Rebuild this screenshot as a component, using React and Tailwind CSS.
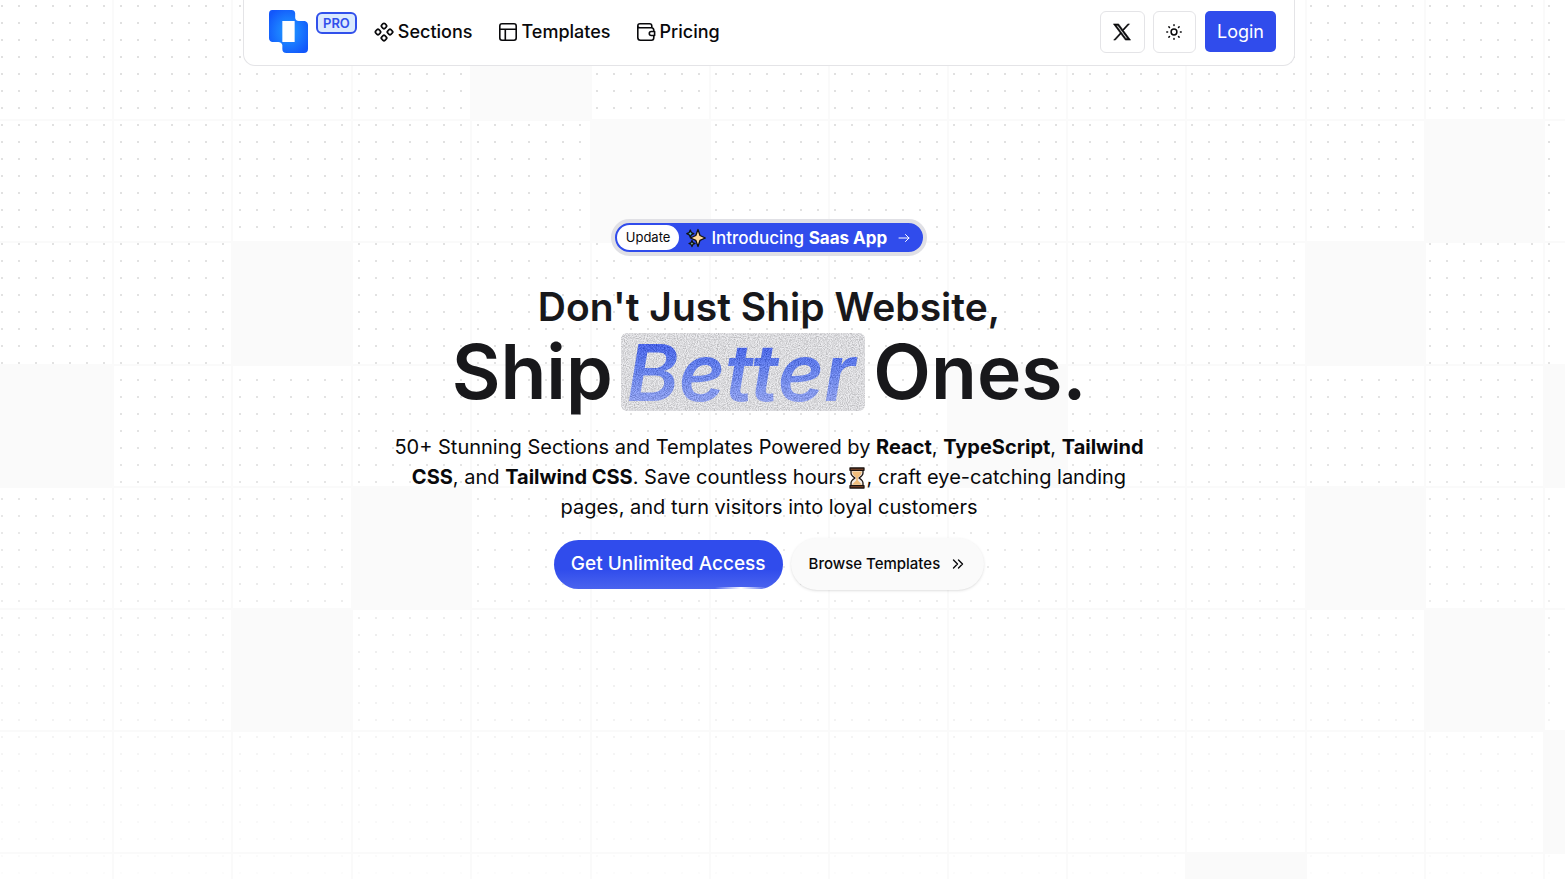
import React from "react";

const columns = [112, 231, 351, 470, 590, 709, 828, 947, 1066, 1185, 1305, 1424, 1543];
const rows = [119, 241, 364, 486, 608, 730, 852];

const cells = [
  [471, 0, 121, 121],
  [591, 120, 119, 122],
  [1425, 120, 119, 122],
  [232, 242, 120, 123],
  [1306, 242, 119, 123],
  [0, 364, 113, 124],
  [948, 364, 120, 124],
  [1543, 364, 120, 124],
  [352, 487, 120, 122],
  [1306, 487, 119, 122],
  [232, 609, 120, 122],
  [1425, 609, 119, 122],
  [1543, 731, 120, 122],
  [1186, 853, 120, 122],
];

function Backdrop() {
  return (
    <svg className="absolute inset-0 -z-10 h-full w-full" aria-hidden="true">
      <defs>
        <pattern id="dots" width="17" height="17" patternUnits="userSpaceOnUse">
          <rect x="1" y="5" width="2" height="2" fill="#e0e0e0" />
        </pattern>
        <linearGradient id="fade" x1="0" y1="0" x2="0" y2="1">
          <stop offset="0" stopColor="#fff" stopOpacity="0" />
          <stop offset="0.5" stopColor="#fff" stopOpacity="0.1" />
          <stop offset="1" stopColor="#fff" stopOpacity="0.9" />
        </linearGradient>
      </defs>
      <rect width="100%" height="100%" fill="url(#dots)" />
      <rect width="100%" height="100%" fill="url(#fade)" />
      {columns.map((x) => (
        <rect key={x} x={x} y="0" width="2" height="100%" fill="#fafafa" />
      ))}
      {rows.map((y) => (
        <rect key={y} x="0" y={y} width="100%" height="2" fill="#fafafa" />
      ))}
      {cells.map(([x, y, w, h]) => (
        <rect key={`${x}-${y}`} x={x} y={y} width={w} height={h} fill="#fafafa" />
      ))}
    </svg>
  );
}

function Logo() {
  return (
    <svg width="39" height="43" viewBox="0 0 38 43" preserveAspectRatio="none" aria-hidden="true">
      <defs>
        <radialGradient id="logo" cx="0.5" cy="0.5" r="0.6">
          <stop offset="0" stopColor="#1f9bff" />
          <stop offset="0.5" stopColor="#1a7bff" />
          <stop offset="1" stopColor="#1257fb" />
        </radialGradient>
      </defs>
      <path
        fill="url(#logo)"
        fillRule="evenodd"
        d="M3 0H22Q25 0 25.500 3V8Q26 11 29 11H35Q38 12 38 15V39Q38 43 34 43H17Q13 43 13 39V35Q12 32 9 32H3Q0 31 0 28V4Q0 0 3 0ZM13 11V32H25V11Z"
      />
    </svg>
  );
}

const stroke = { fill: "none", stroke: "currentColor", strokeLinecap: "round", strokeLinejoin: "round" };

function SectionsIcon() {
  return (
    <svg width="20" height="20" viewBox="0 0 20 20" strokeWidth="1.7" {...stroke} aria-hidden="true">
      <rect x="7.700" y="1.700" width="4.600" height="4.600" rx="1.300" transform="rotate(45 10 4)" />
      <rect x="1.700" y="7.700" width="4.600" height="4.600" rx="1.300" transform="rotate(45 4 10)" />
      <rect x="13.700" y="7.700" width="4.600" height="4.600" rx="1.300" transform="rotate(45 16 10)" />
      <rect x="7.700" y="13.700" width="4.600" height="4.600" rx="1.300" transform="rotate(45 10 16)" />
    </svg>
  );
}

function TemplatesIcon() {
  return (
    <svg width="20" height="20" viewBox="0 0 20 20" strokeWidth="1.600" {...stroke} aria-hidden="true">
      <rect x="1.800" y="1.800" width="16.400" height="16.400" rx="2.200" />
      <path d="M2 7.300H18M7.300 7.300V18" />
    </svg>
  );
}

function PricingIcon() {
  return (
    <svg width="20" height="20" viewBox="0 0 20 20" strokeWidth="1.600" {...stroke} aria-hidden="true">
      <path d="M1.800 4V15.500Q1.800 18.200 4.500 18.200H15.500Q17.800 18.200 17.800 15.500V14.200M17.800 8.500Q17.800 5.800 15.500 5.800H4Q1.800 5.800 1.800 4Q1.800 1.800 4 1.800H13.500Q15.800 1.800 15.800 4V5.800" />
      <path d="M18.600 9.500V13.500H15.300A2 2 0 0 1 15.300 9.500Z" />
    </svg>
  );
}

function XIcon() {
  return (
    <svg width="18" height="18" viewBox="0 0 24 24" fill="currentColor" stroke="currentColor" strokeWidth="0.700" aria-hidden="true">
      <path fillRule="evenodd" d="M0.500 1.200H7.500L13 8.600 19.700 1.200H22L14 10.100 23.500 22.800H16.500L10.500 14.800 3.200 22.800H0.900L9.500 13.300ZM4.500 3.400 17.300 20.600H19.300L6.500 3.400Z" />
    </svg>
  );
}

function SunIcon() {
  return (
    <svg width="16" height="16" viewBox="0 0 16 16" strokeWidth="1.500" {...stroke} aria-hidden="true">
      <circle cx="8" cy="8" r="2.900" />
      <path d="M8 .8V1.600M8 14.400V15.200M.8 8H1.600M14.400 8H15.200M2.900 2.900 3.500 3.500M12.500 12.500 13.100 13.100M2.900 13.100 3.500 12.500M12.500 3.500 13.100 2.900" />
    </svg>
  );
}

function Sparkles() {
  return (
    <svg width="20" height="20" viewBox="0 0 20 20" stroke="#111" strokeWidth="1.300" strokeLinejoin="round" aria-hidden="true">
      <path fill="#ffd89a" d="M12 1.500 14 7.500 19.300 10 14 12.300 12 18.500 9.800 12.300 4.500 10 9.800 7.500Z" />
      <path fill="#4bbbe8" d="M4.300 2 5.300 4.600 7.800 5.700 5.300 6.800 4.300 9.300 3.200 6.800.8 5.700 3.200 4.600Z" />
      <path fill="#8fd0c0" d="M6 12.500 6.900 14.700 9 15.500 6.900 16.400 6 18.600 5 16.400 3 15.500 5 14.700Z" />
    </svg>
  );
}

function Hourglass() {
  return (
    <svg className="inline-block align-[-5px]" width="20" height="22" viewBox="0 0 20 22" stroke="#1b1310" strokeWidth="1.300" strokeLinejoin="round" aria-hidden="true">
      <path fill="#f3ece6" d="M4 3V6Q4 8.500 8 11 4 13.500 4 16V19H16V16Q16 13.500 12 11 16 8.500 16 6V3Z" />
      <path stroke="none" fill="#f0bd7c" d="M5 4.500H15Q14.500 8 10.900 10.500V13.500L15 17.800H5L9.100 13.500V10.500Q5.500 8 5 4.500Z" />
      <path fill="#8a4b2a" d="M3 1H17V3.300H3ZM3 18.700H17V21H3Z" />
    </svg>
  );
}

function Grain() {
  return (
    <svg className="absolute inset-0 h-full w-full rounded-md opacity-25" aria-hidden="true">
      <filter id="grain" x="0" y="0" width="100%" height="100%" colorInterpolationFilters="sRGB">
        <feTurbulence type="fractalNoise" baseFrequency="0.9" numOctaves="2" seed="4" stitchTiles="stitch" />
        <feColorMatrix values="1.700 0 0 0 -0.150  1.700 0 0 0 -0.150  1.700 0 0 0 -0.150  0 0 0 0 1" />
      </filter>
      <rect width="100%" height="100%" filter="url(#grain)" />
    </svg>
  );
}

const links = [
  ["Sections", SectionsIcon],
  ["Templates", TemplatesIcon],
  ["Pricing", PricingIcon],
];

export default function App() {
  return (
    <div className="relative isolate min-h-screen overflow-hidden bg-white pr-[27px] font-['Inter',sans-serif] text-[#09090b]">
      <Backdrop />
      <header className="mx-auto flex h-[66px] max-w-[1052px] items-center rounded-b-xl border border-t-0 border-[#e4e4e7] bg-white pr-[18px] pb-0.5 pl-[25px]">
        <a href="#home" aria-label="Home" className="flex items-start gap-2">
          <Logo />
          <span className="mt-[2px] rounded-md border-2 border-[#3150eb] bg-[#dbeafe] px-[5px] text-[13px] leading-[18px] font-semibold text-[#3150eb]">
            PRO
          </span>
        </a>
        <nav aria-label="Main" className="ml-[17px] flex items-center gap-[25px]">
          {links.map(([label, Icon]) => (
            <a key={label} href={`#${label.toLowerCase()}`} className="flex items-center gap-1 text-[18px] leading-6 font-medium">
              <Icon />
              {label}
            </a>
          ))}
        </nav>
        <div className="ml-auto flex items-center gap-2">
          <a href="#x" aria-label="X" className="flex h-[42px] w-[45px] items-center justify-center rounded-md border border-[#e4e4e7]">
            <XIcon />
          </a>
          <button type="button" aria-label="Toggle theme" className="flex h-[42px] w-[43px] items-center justify-center rounded-md border border-[#e4e4e7]">
            <SunIcon />
          </button>
          <button type="button" className="ml-px h-[41px] rounded-[5px] bg-[#304cec] px-3 text-[18px] text-white">
            Login
          </button>
        </div>
      </header>

      <main className="flex flex-col items-center pt-[153px] text-center">
        <a href="#saas" className="flex h-[37px] items-center rounded-full border-4 border-[#e0e0e5] bg-[#304cec] pr-3 pl-0.5 text-white">
          <span className="flex h-[25px] items-center rounded-full bg-white px-[9px] text-[13px] text-[#09090b]">Update</span>
          <span className="ml-[7px] flex items-center gap-[5px] text-[17px] leading-6">
            <Sparkles />
            <span className="font-medium">
              Introducing <strong className="font-bold">Saas App</strong>
            </span>
          </span>
          <svg className="ml-2.5" width="14" height="14" viewBox="0 0 14 14" strokeWidth="1" {...stroke} aria-hidden="true">
            <path d="M2 7H12M8.500 3.500 12 7 8.500 10.500" />
          </svg>
        </a>

        <h1 className="mt-[26px] font-semibold text-[#18181b]">
          <span className="block text-[39px] leading-[49px]">Don't Just Ship Website,</span>
          <span className="mt-0.5 flex items-center justify-center gap-2 text-[75px] leading-[78px]">
            <span>Ship</span>
            <span className="relative rounded-md bg-[#e8e8ec] px-1.5 text-[79px] leading-[78px]">
              <span className="bg-linear-to-b from-[#1d3cf5] from-15% to-[#91a2ff] to-90% bg-clip-text pr-1 text-transparent italic">Better</span>
              <Grain />
            </span>
            <span>Ones.</span>
          </span>
        </h1>

        <p className="mt-[21px] text-[20px] leading-[30px]">
          50+ Stunning Sections and Templates Powered by <strong>React</strong>, <strong>TypeScript</strong>, <strong>Tailwind</strong>
          <br />
          <strong>CSS</strong>, and <strong>Tailwind CSS</strong>. Save countless hours
          <Hourglass />, craft eye-catching landing
          <br />
          pages, and turn visitors into loyal customers
        </p>

        <div className="mt-4 flex items-center gap-2">
          <button type="button" className="relative h-[49px] overflow-hidden rounded-full bg-linear-to-b from-[#304cec] from-60% to-[#4b63ee] px-[17px] text-[19px] font-medium text-white">
            Get Unlimited Access
            <span className="absolute right-4 bottom-0 h-0.5 w-[52px] bg-linear-to-r from-transparent via-white to-transparent" />
          </button>
          <button type="button" className="flex h-[52px] items-center gap-2.5 rounded-full bg-[#fafafa] px-[18px] text-[15px] font-medium shadow-sm">
            Browse Templates
            <svg width="16" height="16" viewBox="0 0 16 16" strokeWidth="1.400" {...stroke} aria-hidden="true">
              <path d="M3.500 4 7.500 8 3.500 12M8.500 4 12.500 8 8.500 12" />
            </svg>
          </button>
        </div>
      </main>
    </div>
  );
}
